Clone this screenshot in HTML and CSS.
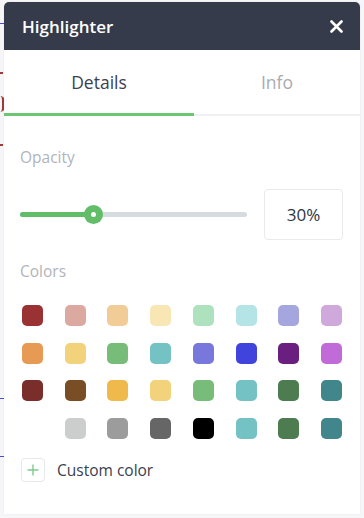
FILE: index.html
```html
<!DOCTYPE html>
<html lang="en">
<head>
    <meta charset="UTF-8">
    <meta name="viewport" content="width=device-width, initial-scale=1.0">
    <title>Highlighter</title>
    <link rel="stylesheet" href="styles.css">
</head>
<body>
    <!-- bits of the document peeking out behind the panel -->
    <div class="backdrop">
        <span class="mark mark-blue" style="top: 23px;"></span>
        <span class="mark mark-red" style="top: 72px;"></span>
        <span class="mark mark-red mark-curve" style="top: 96px;"></span>
        <span class="mark mark-red" style="top: 144px;"></span>
        <span class="mark mark-blue" style="top: 398px;"></span>
        <span class="mark mark-blue" style="top: 456px;"></span>
    </div>

    <div class="panel">
        <div class="panel-header">
            <span class="panel-title">Highlighter</span>
            <button class="close-btn" aria-label="Close">
                <svg width="13" height="13" viewBox="0 0 13 13">
                    <path d="M1.5 1.5 L11.5 11.5 M11.5 1.5 L1.5 11.5" stroke="#fff" stroke-width="2.6" stroke-linecap="round"/>
                </svg>
            </button>
        </div>

        <div class="tabs">
            <div class="tab tab-active">Details</div>
            <div class="tab tab-info">Info</div>
        </div>

        <div class="panel-body">
            <div class="section-label">Opacity</div>
            <div class="opacity-row">
                <div class="slider">
                    <div class="slider-fill"></div>
                    <div class="slider-thumb"></div>
                </div>
                <div class="opacity-input">30%</div>
            </div>

            <div class="section-label colors-label">Colors</div>
            <div class="swatches" id="swatches"></div>

            <div class="custom-color">
                <span class="plus-box">
                    <svg width="12" height="12" viewBox="0 0 12 12">
                        <path d="M6 0.5 V11.5 M0.5 6 H11.5" stroke="#7fcb8c" stroke-width="1.4"/>
                    </svg>
                </span>
                <span>Custom color</span>
            </div>
        </div>
    </div>

    <script>
        const colors = [
            '#9a3133', '#dca9a0', '#f2cc96', '#f8e7b5', '#aee1bd', '#b5e4e6', '#a6a6de', '#d0a9dc',
            '#e69a53', '#f2d27b', '#78bc79', '#74c2c3', '#7878dc', '#4043dc', '#6a1f80', '#c06bd8',
            '#7a2e2b', '#7a4e25', '#f0b94b', '#f2d27b', '#78bc79', '#74c2c3', '#4e7c51', '#40868a',
            null, '#cccecd', '#9c9c9c', '#666666', '#000000', '#74c2c3', '#4e7c51', '#40868a'
        ];

        const grid = document.getElementById('swatches');
        colors.forEach(c => {
            const sw = document.createElement('span');
            sw.className = c ? 'swatch' : 'swatch swatch-empty';
            if (c) sw.style.background = c;
            grid.appendChild(sw);
        });
    </script>
</body>
</html>
```
FILE: styles.css
```css
body {
    font-family: "Open Sans", "Noto Sans", Arial, sans-serif;
    background-color: #f6f6f8;
    margin: 0;
    padding: 2px 4px 0;
    height: 516px;
    overflow: hidden;
}

.backdrop {
    position: absolute;
    top: 0;
    left: 0;
}

    .backdrop .mark {
        position: absolute;
        left: 0;
        width: 4px;
    }

    .backdrop .mark-blue {
        height: 1px;
        background: #4a4ae0;
    }

    .backdrop .mark-red {
        height: 2px;
        width: 3px;
        background: #a33a3a;
    }

    .backdrop .mark-curve {
        height: 16px;
        background: none;
        border-right: 3px solid #a33a3a;
        border-radius: 0 8px 8px 0;
        width: 2px;
    }

.panel {
    position: relative;
    width: 356px;
    height: 512px;
    background: #fff;
    border-radius: 5px 5px 0 0;
    box-shadow: 0 0 2px rgba(0, 0, 0, 0.08);
}

.panel-header {
    height: 48px;
    background: #363b4c;
    border-radius: 5px 5px 0 0;
    display: flex;
    align-items: center;
    justify-content: space-between;
    padding: 0 17px 0 18px;
}

.panel-title {
    color: #fff;
    font-size: 17px;
    font-weight: 600;
}

.close-btn {
    background: none;
    border: none;
    padding: 0;
    display: flex;
    cursor: pointer;
}

.tabs {
    display: flex;
    height: 66px;
    border-bottom: 2px solid #eef0f2;
    box-sizing: border-box;
}

.tab {
    display: flex;
    align-items: center;
    justify-content: center;
    font-size: 17.5px;
    box-sizing: border-box;
}

.tab-active {
    width: 190px;
    color: #3a4050;
    border-bottom: 3px solid #6cc673;
    margin-bottom: -2px;
}

.tab-info {
    flex: 1;
    color: #a8abb0;
}

.panel-body {
    padding: 0 16px;
}

.section-label {
    font-size: 15.5px;
    color: #b0b4ba;
    margin-top: 31px;
    line-height: 20px;
}

.colors-label {
    margin-top: 21px;
}

.opacity-row {
    display: flex;
    align-items: center;
    justify-content: space-between;
    margin-top: 22px;
}

.slider {
    position: relative;
    width: 227px;
    height: 5px;
    background: #d5dce1;
    border-radius: 3px;
}

.slider-fill {
    width: 73px;
    height: 100%;
    background: #62bd69;
    border-radius: 3px;
}

.slider-thumb {
    position: absolute;
    left: 64px;
    top: -7px;
    width: 19px;
    height: 19px;
    border-radius: 50%;
    background: #62bd69;
    display: flex;
    align-items: center;
    justify-content: center;
}

    .slider-thumb::after {
        content: "";
        width: 5px;
        height: 5px;
        border-radius: 50%;
        background: #fff;
    }

.opacity-input {
    width: 79px;
    height: 51px;
    border: 1px solid #e8eaec;
    border-radius: 4px;
    box-sizing: border-box;
    display: flex;
    align-items: center;
    justify-content: center;
    font-size: 17px;
    color: #2f3440;
    margin-right: 1px;
}

.swatches {
    display: grid;
    grid-template-columns: repeat(8, 21px);
    justify-content: space-between;
    row-gap: 16.5px;
    margin: 24px 2px 0;
}

.swatch {
    width: 21px;
    height: 21px;
    border-radius: 5px;
}

.swatch-empty {
    background: transparent;
}

.custom-color {
    display: flex;
    align-items: center;
    gap: 12px;
    margin-top: 19px;
    margin-left: 1px;
    font-size: 15.5px;
    color: #3a4050;
}

.plus-box {
    width: 24px;
    height: 24px;
    border: 1px solid #e6e8ea;
    border-radius: 4px;
    box-sizing: border-box;
    display: flex;
    align-items: center;
    justify-content: center;
}
```
